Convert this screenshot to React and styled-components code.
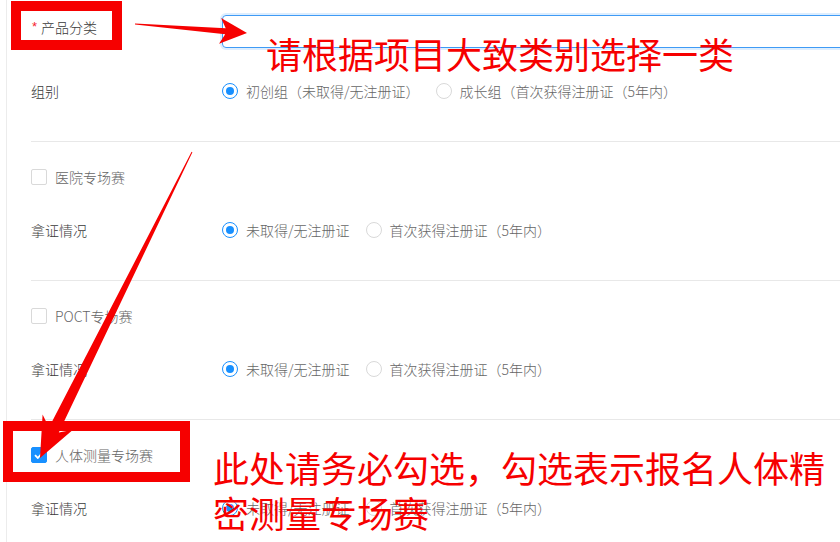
import styled, { createGlobalStyle } from 'styled-components';

const GlobalStyle = createGlobalStyle`
  html, body {
    margin: 0;
    padding: 0;
    background: #ffffff;
    overflow: hidden;
  }
  body {
    font-family: "Microsoft YaHei", "Noto Sans CJK SC", "Noto Sans", sans-serif;
  }
`;

const RED = '#f60000';

const SECTIONS = [
  { name: '医院专场赛', checked: false, option2: '首次获得注册证（5年内）' },
  { name: 'POCT专场赛', checked: false, option2: '首次获得注册证（5年内）' },
  { name: '人体测量专场赛', checked: true, option2: '首次获得注册证（5年内）' },
];

// builds a tapered arrow polygon, tail -> tip
function arrowPoints(tail, tip, w0, w1, headLen, headHalf, notch) {
  const dx = tip[0] - tail[0];
  const dy = tip[1] - tail[1];
  const len = Math.hypot(dx, dy);
  const ux = dx / len;
  const uy = dy / len;
  const nx = -uy;
  const ny = ux;
  const neck = [tip[0] - ux * headLen * notch, tip[1] - uy * headLen * notch];
  const base = [tip[0] - ux * headLen, tip[1] - uy * headLen];
  const pts = [
    [tail[0] + nx * w0 / 2, tail[1] + ny * w0 / 2],
    [neck[0] + nx * w1 / 2, neck[1] + ny * w1 / 2],
    [base[0] + nx * headHalf, base[1] + ny * headHalf],
    tip,
    [base[0] - nx * headHalf, base[1] - ny * headHalf],
    [neck[0] - nx * w1 / 2, neck[1] - ny * w1 / 2],
    [tail[0] - nx * w0 / 2, tail[1] - ny * w0 / 2],
  ];
  return pts.map((p) => `${p[0].toFixed(1)},${p[1].toFixed(1)}`).join(' ');
}

function Radio({ checked, children }) {
  return (
    <RadioWrap>
      <RadioDot checked={checked} />
      <OptionText>{children}</OptionText>
    </RadioWrap>
  );
}

function CheckMark() {
  return (
    <svg width="10" height="8" viewBox="0 0 10 8">
      <path d="M1 4.2 L3.8 7 L9 1.2" fill="none" stroke="#fff" strokeWidth="1.8" />
    </svg>
  );
}

export default function App() {
  return (
    <Page>
      <GlobalStyle />
      <Panel>
        <Head>
          <FormRow>
            <Label raised>
              <Required>*</Required>产品分类
            </Label>
            <Control>
              <SelectBox />
            </Control>
          </FormRow>
          <FormRow style={{ marginTop: '28px' }}>
            <Label>组别</Label>
            <Control>
              <Radio checked>初创组（未取得/无注册证）</Radio>
              <Radio>成长组（首次获得注册证（5年内）</Radio>
            </Control>
          </FormRow>
        </Head>

        {SECTIONS.map((s) => (
          <Section key={s.name}>
            <CheckRow>
              <CheckBox checked={s.checked}>{s.checked && <CheckMark />}</CheckBox>
              <CheckLabel>{s.name}</CheckLabel>
            </CheckRow>
            <FieldRow>
              <Label>拿证情况</Label>
              <Control>
                <Radio checked>未取得/无注册证</Radio>
                <Radio>{s.option2}</Radio>
              </Control>
            </FieldRow>
          </Section>
        ))}
      </Panel>

      {/* annotations drawn over the form */}
      <RedBox left={11} top={1} width={111} height={49} />
      <RedBox left={3} top={421} width={187} height={61} />

      <Arrows width="840" height="542" viewBox="0 0 840 542">
        <polygon fill={RED} points={arrowPoints([135, 24], [247, 33], 1, 6, 27, 13, 0.8)} />
        <polygon fill={RED} points={arrowPoints([192, 152], [40, 458], 1, 11, 40, 17, 0.78)} />
      </Arrows>

      <Note left={266} top={31}>请根据项目大致类别选择一类</Note>
      <Note left={213} top={445} width={620}>此处请务必勾选，勾选表示报名人体精密测量专场赛</Note>
    </Page>
  );
}

const Page = styled.div`
  position: relative;
  width: 840px;
  height: 542px;
  overflow: hidden;
  background: #ffffff;
`;

const Panel = styled.div`
  margin-left: 6px;
  min-height: 542px;
  border-left: 1px solid #ececec;
  padding-left: 24px;
  box-sizing: border-box;
`;

const Head = styled.div`
  padding-top: 15px;
  padding-bottom: 34px;
`;

const FormRow = styled.div`
  display: flex;
  align-items: center;
  height: 32px;
`;

const FieldRow = styled(FormRow)`
  margin-top: 26px;
`;

const Label = styled.div`
  width: 191px;
  flex-shrink: 0;
  font-size: 14px;
  font-weight: 300;
  color: #3a3a3a;
  display: flex;
  align-items: center;
  padding-bottom: ${(p) => (p.raised ? '9px' : '0')};
`;

const Required = styled.span`
  color: #f5222d;
  font-family: SimSun, "Liberation Sans", sans-serif;
  font-size: 13px;
  margin: 0 4px 0 1px;
`;

const Control = styled.div`
  flex: 1;
  display: flex;
  align-items: center;
  min-width: 0;
`;

const SelectBox = styled.div`
  width: 700px;
  height: 31px;
  flex-shrink: 0;
  border: 1px solid #3f9bf5;
  border-radius: 4px;
  box-shadow: 0 0 0 2px rgba(24, 144, 255, 0.15);
`;

const RadioWrap = styled.label`
  display: inline-flex;
  align-items: center;
  margin-right: 8px;
  white-space: nowrap;
`;

const RadioDot = styled.span`
  position: relative;
  width: 14px;
  height: 14px;
  border-radius: 50%;
  border: 1px solid ${(p) => (p.checked ? '#1890ff' : '#d9d9d9')};
  background: #ffffff;
  flex-shrink: 0;
  &::after {
    content: '';
    display: ${(p) => (p.checked ? 'block' : 'none')};
    position: absolute;
    left: 3px;
    top: 3px;
    width: 8px;
    height: 8px;
    border-radius: 50%;
    background: #1890ff;
  }
`;

const OptionText = styled.span`
  padding: 0 8px;
  font-size: 14px;
  font-weight: 300;
  color: #666666;
`;

const Section = styled.div`
  border-top: 1px solid #e8e8e8;
  padding: 24px 0 34px;
`;

const CheckRow = styled.div`
  display: flex;
  align-items: center;
  height: 22px;
`;

const CheckBox = styled.span`
  width: 16px;
  height: 16px;
  box-sizing: border-box;
  border-radius: 2px;
  border: 1px solid ${(p) => (p.checked ? '#1890ff' : '#d9d9d9')};
  background: ${(p) => (p.checked ? '#1890ff' : '#ffffff')};
  display: flex;
  align-items: center;
  justify-content: center;
`;

const CheckLabel = styled.span`
  padding-left: 8px;
  font-size: 14px;
  font-weight: 300;
  color: #666666;
`;

const RedBox = styled.div`
  position: absolute;
  left: ${(p) => p.left}px;
  top: ${(p) => p.top}px;
  width: ${(p) => p.width}px;
  height: ${(p) => p.height}px;
  border: 10px solid ${RED};
  box-sizing: border-box;
`;

const Arrows = styled.svg`
  position: absolute;
  left: 0;
  top: 0;
  pointer-events: none;
`;

const Note = styled.div`
  position: absolute;
  left: ${(p) => p.left}px;
  top: ${(p) => p.top}px;
  width: ${(p) => (p.width ? `${p.width}px` : 'auto')};
  font-size: 36px;
  line-height: 45px;
  color: ${RED};
  white-space: ${(p) => (p.width ? 'normal' : 'nowrap')};
  font-family: "Microsoft YaHei", "Noto Sans CJK SC", sans-serif;
`;
